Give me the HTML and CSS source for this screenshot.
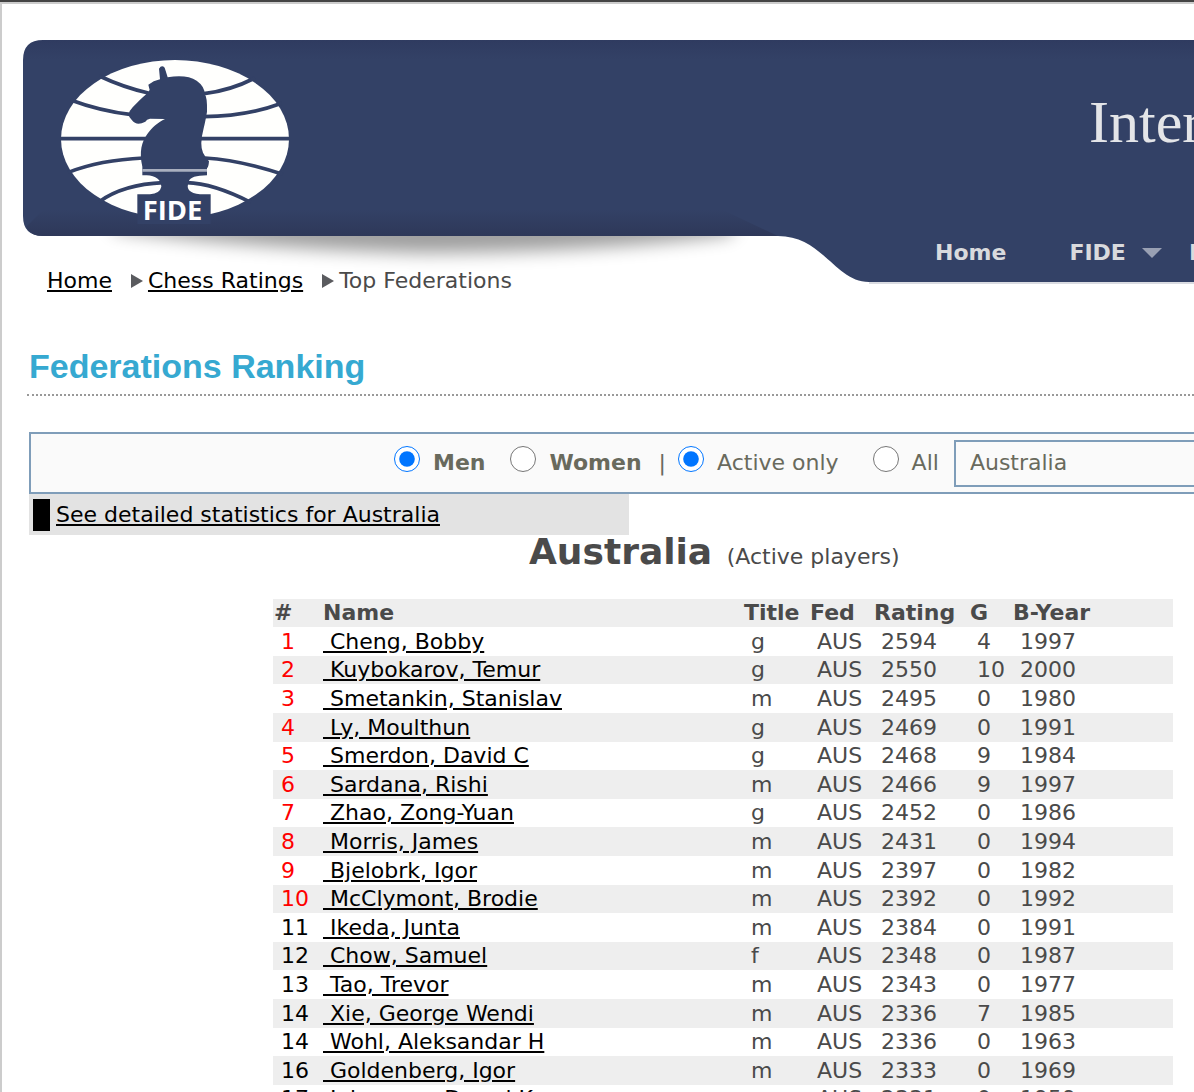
FILE: index.html
```html
<!DOCTYPE html>
<html lang="en">
<head>
<meta charset="utf-8">
<title>Federations Ranking</title>
<link rel="stylesheet" href="styles.css">
</head>
<body>
<header class="site-header">
  <svg class="banner" width="4000" height="260" viewBox="0 0 4000 260" aria-hidden="true">
    <defs>
      <linearGradient id="navy" x1="0" y1="0" x2="0" y2="243" gradientUnits="userSpaceOnUse">
        <stop offset="0" stop-color="#2f3b60"/>
        <stop offset=".08" stop-color="#334166"/>
        <stop offset="1" stop-color="#334166"/>
      </linearGradient>
      <linearGradient id="edge" x1="0" y1="170" x2="0" y2="196" gradientUnits="userSpaceOnUse">
        <stop offset="0" stop-color="#2e3859" stop-opacity="0"/>
        <stop offset="1" stop-color="#2e3859"/>
      </linearGradient>
      <filter id="soft" x="-10%" y="-60%" width="120%" height="220%"><feGaussianBlur stdDeviation="9"/></filter>
    </defs>
    <path d="M90 180H710V194Q580 212 400 213Q220 208 90 190Z" fill="#000" opacity=".38" filter="url(#soft)"/>
    <path d="M20 0H4000V242H846C812 242 800 196 755 196H20Q0 196 0 176V20Q0 0 20 0Z" fill="url(#navy)"/>
    <path d="M20 170H700L755 196H20Q8 196 3 187Z" fill="url(#edge)"/>
    <path d="M846 243H4000" stroke="#b4b8c4" stroke-width="1"/>
  </svg>
  <div class="brand">
    <svg class="logo" viewBox="183 180 684 492" role="img" aria-label="FIDE">
      <ellipse cx="525" cy="417" rx="342" ry="237" fill="#fffffd"/>
      <g fill="none" stroke="#334166" stroke-width="11">
        <path d="M298 228Q370 262 445 279M765 234Q690 272 612 281"/>
        <path d="M212 300Q300 333 395 344M845 310Q740 349 612 350"/>
        <path d="M180 416H870"/>
        <path d="M205 517Q300 480 430 474M615 474Q720 480 848 523"/>
        <path d="M298 605Q370 553 490 548M560 548Q640 550 752 607"/>
      </g>
      <path fill="#334166" d="M427 526V500C417 455 425 425 442 402C455 383 475 366 495 357L450 356Q440 358 436 365Q410 379 396 361Q386 353 386 343Q388 332 398 322Q420 298 437 284L449 270L445 254Q460 242 480 238L477 206Q485 193 494 203L503 232Q560 223 590 242Q615 260 614 283Q622 290 621 335Q618 355 611 385Q598 435 609 458Q615 470 627 484Q626 500 621 505V526Q572 526 566 545Q553 578 600 583H632V672H412V583H450Q480 580 484 560Q482 528 440 526Z"/>
      <path d="M427 511H621" stroke="#a9afbf" stroke-width="8"/>
      <text class="logo-text" x="428" y="660">FIDE</text>
    </svg>
    <span class="site-title">International</span>
  </div>
  <nav class="main-nav">
    <a href="#">Home</a>
    <a class="has-menu" href="#">FIDE</a>
    <a href="#">Information</a>
  </nav>
</header>

<nav class="breadcrumb" aria-label="Breadcrumb">
  <a href="#">Home</a>
  <a href="#">Chess Ratings</a>
  <span>Top Federations</span>
</nav>

<main class="content">
  <h1>Federations Ranking</h1>

  <form class="filters">
    <label class="strong"><input type="radio" name="sex" checked>Men</label>
    <label class="strong women"><input type="radio" name="sex">Women</label>
    <span class="bar">|</span>
    <label class="active"><input type="radio" name="scope" checked>Active only</label>
    <label class="all"><input type="radio" name="scope">All</label>
    <select aria-label="Federation"><option>Australia</option></select>
  </form>

  <div class="stats"><a href="#">See detailed statistics for Australia</a></div>

  <h2>Australia <small>(Active players)</small></h2>

  <table class="ranking">
    <colgroup><col class="c-rank"><col class="c-name"><col class="c-title"><col class="c-fed"><col class="c-rating"><col class="c-games"><col></colgroup>
    <thead>
      <tr><th>#</th><th>Name</th><th>Title</th><th>Fed</th><th>Rating</th><th>G</th><th>B-Year</th></tr>
    </thead>
    <tbody>
      <tr class="top"><td>1</td><td><a href="#">&nbsp;Cheng, Bobby</a></td><td>g</td><td>AUS</td><td>2594</td><td>4</td><td>1997</td></tr>
      <tr class="top"><td>2</td><td><a href="#">&nbsp;Kuybokarov, Temur</a></td><td>g</td><td>AUS</td><td>2550</td><td>10</td><td>2000</td></tr>
      <tr class="top"><td>3</td><td><a href="#">&nbsp;Smetankin, Stanislav</a></td><td>m</td><td>AUS</td><td>2495</td><td>0</td><td>1980</td></tr>
      <tr class="top"><td>4</td><td><a href="#">&nbsp;Ly, Moulthun</a></td><td>g</td><td>AUS</td><td>2469</td><td>0</td><td>1991</td></tr>
      <tr class="top"><td>5</td><td><a href="#">&nbsp;Smerdon, David C</a></td><td>g</td><td>AUS</td><td>2468</td><td>9</td><td>1984</td></tr>
      <tr class="top"><td>6</td><td><a href="#">&nbsp;Sardana, Rishi</a></td><td>m</td><td>AUS</td><td>2466</td><td>9</td><td>1997</td></tr>
      <tr class="top"><td>7</td><td><a href="#">&nbsp;Zhao, Zong-Yuan</a></td><td>g</td><td>AUS</td><td>2452</td><td>0</td><td>1986</td></tr>
      <tr class="top"><td>8</td><td><a href="#">&nbsp;Morris, James</a></td><td>m</td><td>AUS</td><td>2431</td><td>0</td><td>1994</td></tr>
      <tr class="top"><td>9</td><td><a href="#">&nbsp;Bjelobrk, Igor</a></td><td>m</td><td>AUS</td><td>2397</td><td>0</td><td>1982</td></tr>
      <tr class="top"><td>10</td><td><a href="#">&nbsp;McClymont, Brodie</a></td><td>m</td><td>AUS</td><td>2392</td><td>0</td><td>1992</td></tr>
      <tr><td>11</td><td><a href="#">&nbsp;Ikeda, Junta</a></td><td>m</td><td>AUS</td><td>2384</td><td>0</td><td>1991</td></tr>
      <tr><td>12</td><td><a href="#">&nbsp;Chow, Samuel</a></td><td>f</td><td>AUS</td><td>2348</td><td>0</td><td>1987</td></tr>
      <tr><td>13</td><td><a href="#">&nbsp;Tao, Trevor</a></td><td>m</td><td>AUS</td><td>2343</td><td>0</td><td>1977</td></tr>
      <tr><td>14</td><td><a href="#">&nbsp;Xie, George Wendi</a></td><td>m</td><td>AUS</td><td>2336</td><td>7</td><td>1985</td></tr>
      <tr><td>14</td><td><a href="#">&nbsp;Wohl, Aleksandar H</a></td><td>m</td><td>AUS</td><td>2336</td><td>0</td><td>1963</td></tr>
      <tr><td>16</td><td><a href="#">&nbsp;Goldenberg, Igor</a></td><td>m</td><td>AUS</td><td>2333</td><td>0</td><td>1969</td></tr>
      <tr><td>17</td><td><a href="#">&nbsp;Johansen, Darryl K</a></td><td>g</td><td>AUS</td><td>2331</td><td>0</td><td>1959</td></tr>
    </tbody>
  </table>
</main>
</body>
</html>
```
FILE: styles.css
```css
* { box-sizing: border-box; }

html {
  height: 100%;
  overflow: hidden;
  border-top: 2px solid #444;
}

body {
  margin: 0;
  border-top: 2px solid #ccc;
  border-left: 2px solid #ccc;
  background: #fff;
  color: #4a4a4a;
  font: 22px/28px Verdana, "DejaVu Sans", sans-serif;
}

a {
  color: #000;
  text-decoration-thickness: 2px;
  text-underline-offset: 2px;
}

/* Header */
.site-header {
  position: relative;
  padding-top: 56px;
  overflow-x: clip;
  white-space: nowrap;
}

.banner {
  position: absolute;
  top: 36px;
  left: 21px;
  z-index: -1;
}

.brand {
  display: flex;
  gap: 800px;
  height: 179px;
  padding-left: 59px;
}

.logo {
  flex: none;
  width: 228px;
  height: 164px;
}

.logo-text {
  font: bold 82px "Open Sans", "Noto Sans", sans-serif;
  fill: #fff;
}

.site-title {
  padding-top: 30px;
  color: #e4e5e8;
  font: 60px/64px "Liberation Serif", serif;
}

.main-nav {
  display: flex;
  gap: 63px;
  padding-left: 933px;
}

.main-nav a {
  color: #d9dadd;
  font-weight: bold;
  text-decoration: none;
}

.main-nav .has-menu {
  display: flex;
  align-items: center;
  gap: 16px;
  margin-right: -36px;
}

.has-menu::after {
  content: "";
  border: 10px solid transparent;
  border-top-color: #99a0b3;
  border-bottom: 0;
}

/* Breadcrumb */
.breadcrumb {
  display: flex;
  gap: 19px;
  padding-left: 45px;
}

.breadcrumb > * + * {
  display: flex;
  align-items: center;
  gap: 5px;
}

.breadcrumb > * + *::before {
  content: "";
  border: 7px solid transparent;
  border-left: 12px solid #5a5b5f;
  border-right: 0;
}

/* Content */
.content { padding-left: 27px; }

h1 {
  margin: 44px 0 36px -2px;
  padding: 2px 2px 3px;
  border-bottom: 2px dotted #999;
  color: #36a9d1;
  font: bold 34px/50px "Arial Narrow", "Liberation Sans Narrow", "Liberation Sans", sans-serif;
}

.filters {
  display: flex;
  align-items: center;
  height: 62px;
  padding-left: 363px;
  border: 2px solid #7f9db9;
  border-right: 0;
  background: #fafafa;
  color: #696a5d;
  white-space: nowrap;
}

.filters label {
  display: flex;
  gap: 13px;
}

.filters input {
  width: 26px;
  height: 26px;
  margin: -3px 0 0;
}

.filters .strong { font-weight: bold; }
.filters .women { margin: 0 17px 0 25px; }
.filters .active { margin: 0 34px 0 12px; }
.filters .all { margin-right: 15px; }

.filters select {
  flex: 1;
  height: 47px;
  padding: 0 14px;
  appearance: none;
  border: 2px solid #7f9db9;
  border-right: 0;
  border-radius: 0;
  background: #fafafa;
  color: #696a5d;
  font: inherit;
}

.stats {
  display: flex;
  align-items: center;
  gap: 6px;
  width: 600px;
  height: 41px;
  padding-left: 4px;
  background: #e3e3e3;
}

.stats::before {
  content: "";
  width: 17px;
  height: 32px;
  background: #000;
}

h2 {
  margin: 0 0 31px 500px;
  font-size: 36px;
  line-height: 33px;
}

h2 small {
  margin-left: 2px;
  font-size: 22px;
  font-weight: normal;
  line-height: 22px;
}

/* Ranking table */
.ranking {
  width: 900px;
  margin-left: 244px;
  border-collapse: collapse;
  table-layout: fixed;
}

.c-rank { width: 49px; }
.c-name { width: 421px; }
.c-title { width: 66px; }
.c-fed { width: 64px; }
.c-rating { width: 96px; }
.c-games { width: 43px; }

.ranking tr { height: 29px; }
.ranking thead tr,
.ranking tbody tr:nth-child(5n + 2),
.ranking tbody tr:nth-child(5n) { height: 28px; }

.ranking thead tr,
.ranking tbody tr:nth-child(even) { background: #eee; }

.ranking th {
  padding: 0 0 0 1px;
  text-align: left;
}

.ranking td { padding: 0 0 0 8px; }
.ranking td:nth-child(2) { padding-left: 1px; }
.ranking td:first-child { color: #000; }
.ranking .top td:first-child { color: #f00; }
```
